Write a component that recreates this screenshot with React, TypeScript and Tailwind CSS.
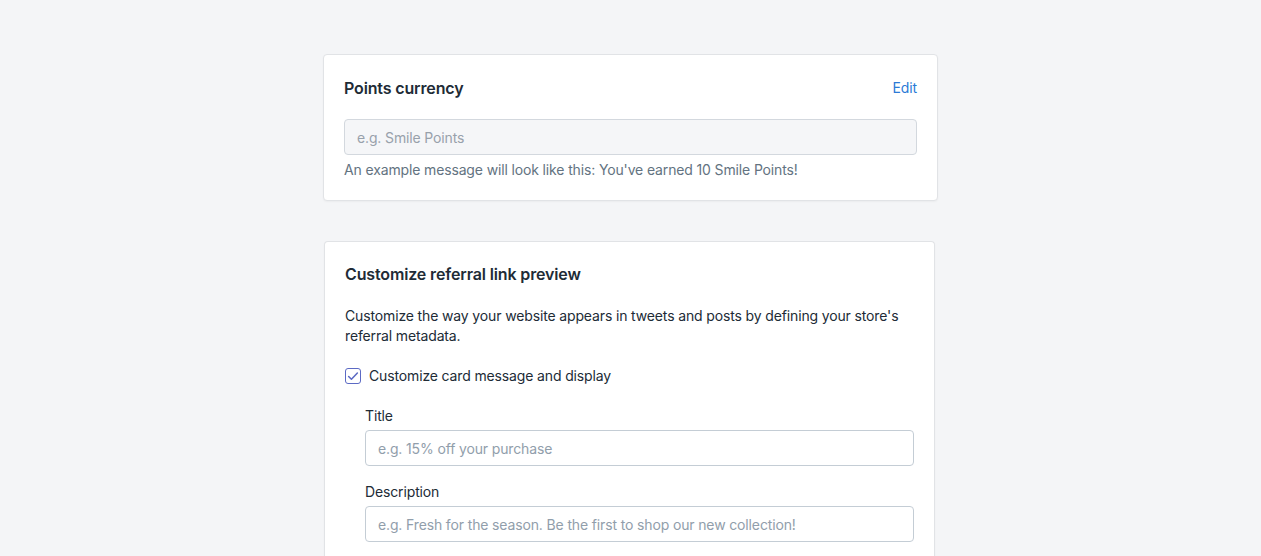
export default function App() {
  return (
    <div className="min-h-screen bg-[#f4f5f7] pt-[54px] font-['Inter',sans-serif] tracking-[-0.14px] text-[#212b36]">
      <div className="mx-auto flex w-[615px] flex-col gap-10">
        {/* Points currency */}
        <section className="w-[615px] rounded-[4px] border border-[#e1e3e6] bg-white px-5 pt-5 pb-5 shadow-[0_1px_2px_rgba(0,0,0,0.04)]">
          <div className="flex items-center justify-between pt-px">
            <h2 className="text-base leading-6 font-semibold">Points currency</h2>
            <button className="text-sm leading-6 text-[#2c7ad6]">Edit</button>
          </div>
          <input
            className="mt-[19px] block h-9 w-full rounded-[4px] border border-[#d3d8de] bg-[#f5f6f8] px-3 text-sm placeholder:text-[#98a1ab] outline-none"
            placeholder="e.g. Smile Points"
            disabled
          />
          <p className="mt-[5px] text-sm leading-5 text-[#637381]">
            An example message will look like this: You've earned 10 Smile Points!
          </p>
        </section>

        {/* Referral link preview */}
        <section className="ml-px w-[611px] rounded-t-[4px] border border-b-0 border-[#e1e3e6] bg-white px-5 pt-5 pb-8 shadow-[0_1px_2px_rgba(0,0,0,0.04)]">
          <h2 className="text-base leading-6 font-semibold">Customize referral link preview</h2>
          <p className="mt-5 text-sm leading-5 text-[#212b36]">
            Customize the way your website appears in tweets and posts by defining your store's referral metadata.
          </p>
          <label className="mt-5 flex items-center gap-2 text-sm leading-5">
            <span className="flex h-4 w-4 items-center justify-center rounded-[3px] border border-[#5c6ac4] bg-white">
              <svg viewBox="0 0 16 16" className="h-3.5 w-3.5" fill="none" stroke="#5c6ac4" strokeWidth="1.75" strokeLinecap="round" strokeLinejoin="round">
                <path d="M3 8.5l3.2 3.2L13 4.5" />
              </svg>
            </span>
            Customize card message and display
          </label>

          <div className="ml-5">
            <div className="mt-5">
              <div className="text-sm leading-5">Title</div>
              <input
                className="mt-1 block h-9 w-full rounded-[4px] border border-[#c4cdd5] bg-white px-3 text-sm placeholder:text-[#919eab] outline-none"
                placeholder="e.g. 15% off your purchase"
              />
            </div>
            <div className="mt-4">
              <div className="text-sm leading-5">Description</div>
              <input
                className="mt-1 block h-9 w-full rounded-[4px] border border-[#c4cdd5] bg-white px-3 text-sm placeholder:text-[#919eab] outline-none"
                placeholder="e.g. Fresh for the season. Be the first to shop our new collection!"
              />
            </div>
          </div>
        </section>
      </div>
    </div>
  )
}
